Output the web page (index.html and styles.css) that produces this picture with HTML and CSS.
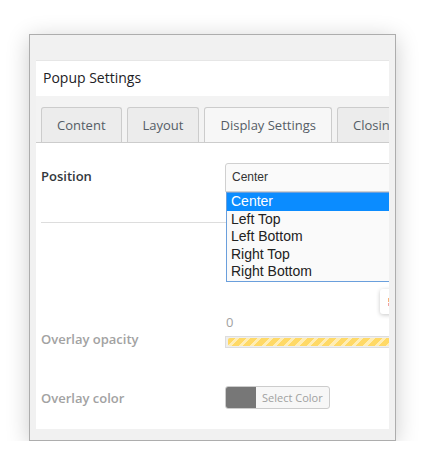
FILE: index.html
```html
<!DOCTYPE html>
<html>
<head>
<meta charset="utf-8">
<link rel="stylesheet" href="styles.css">
</head>
<body>
<div class="window">
  <div class="panel">
    <div class="header">Popup Settings</div>
    <div class="tabs">
      <div class="tab">Content</div>
      <div class="tab">Layout</div>
      <div class="tab active">Display Settings</div>
      <div class="tab">Closing</div>
    </div>
    <div class="content">
      <div class="row row-position">
        <div class="label">Position</div>
        <div class="control">
          <div class="select">Center</div>
          <ul class="dropdown">
            <li class="selected">Center</li>
            <li>Left Top</li>
            <li>Left Bottom</li>
            <li>Right Top</li>
            <li>Right Bottom</li>
          </ul>
        </div>
      </div>
      <div class="row row-opacity">
        <div class="label muted">Overlay opacity</div>
        <div class="control">
          <div class="tip"><span class="tip-mark"></span></div>
          <div class="value">0</div>
          <div class="slider"><div class="slider-fill"></div></div>
        </div>
      </div>
      <div class="row row-color">
        <div class="label muted">Overlay color</div>
        <div class="control">
          <div class="color-btn"><span class="swatch"></span><span class="color-text">Select Color</span></div>
        </div>
      </div>
    </div>
  </div>
</div>
</body>
</html>
```
FILE: styles.css
```css
html, body {
  margin: 0;
  padding: 0;
  background: #ffffff;
}
body {
  font-family: "Open Sans", "Liberation Sans", sans-serif;
  padding-top: 34px;
  padding-left: 29px;
}
.window {
  width: 353px;
  border: 1px solid #adadad;
  background: #f1f1f1;
  padding: 25px 6px 11px 6px;
  box-shadow: 0 4px 22px rgba(0, 0, 0, 0.2);
}
.panel {
  overflow: hidden;
  border-top: 1px solid #e6e6e6;
}
.header {
  background: #ffffff;
  height: 35px;
  line-height: 34px;
  padding-left: 7px;
  font-size: 14px;
  font-weight: 500;
  color: #1d2125;
  white-space: nowrap;
}
.tabs {
  display: flex;
  gap: 5px;
  background: #f3f3f3;
  padding: 11px 0 0 5px;
  border-bottom: 1px solid #cccccc;
  white-space: nowrap;
  height: 35px;
}
.tab {
  flex: none;
  height: 35px;
  box-sizing: border-box;
  line-height: 34px;
  padding: 0 15px;
  border: 1px solid #cccccc;
  border-bottom: none;
  border-radius: 3px 3px 0 0;
  background: #ececec;
  font-size: 13px;
  color: #555d66;
}
.tab.active {
  background: #f7f7f7;
}
.content {
  background: #ffffff;
  padding: 0 0 20px 5px;
}
.row {
  display: grid;
  grid-template-columns: 184px 260px;
}
.label {
  font-size: 13px;
  font-weight: 600;
  color: #32373c;
  white-space: nowrap;
}
.label.muted {
  color: #a2a2a2;
}
.control {
  position: relative;
}
.row-position {
  padding: 20px 0 30px 0;
  border-bottom: 1px solid #dddddd;
  margin-right: -100px;
}
.row-position .label {
  line-height: 26px;
}
.select {
  height: 29px;
  box-sizing: border-box;
  border: 1px solid #d0d0d0;
  border-radius: 3px 3px 0 0;
  background: #fafafa;
  font-family: "Liberation Sans", Arial, sans-serif;
  font-size: 12px;
  line-height: 27px;
  padding-left: 6px;
  color: #333333;
}
.dropdown {
  position: absolute;
  top: 29px;
  left: 1px;
  right: 0;
  margin: 0;
  padding: 0;
  list-style: none;
  border: 1px solid #6a9fdc;
  background: #fafafa;
  font-family: "Liberation Sans", Arial, sans-serif;
  font-size: 14px;
  color: #222222;
  z-index: 2;
}
.dropdown li {
  height: 17.6px;
  line-height: 17.6px;
  padding-left: 4px;
}
.dropdown li.selected {
  background: #0b8cff;
  color: #ffffff;
}
.row-opacity {
  padding-top: 90px;
}
.row-opacity .label {
  align-self: end;
  line-height: 18px;
}
.tip {
  position: absolute;
  left: 155px;
  top: -24px;
  width: 16px;
  height: 25px;
  background: #ffffff;
  border-radius: 3px;
  box-shadow: 0 1px 4px rgba(0, 0, 0, 0.22);
}
.tip-mark {
  position: absolute;
  left: 8px;
  top: 9px;
  width: 2px;
  height: 8px;
  background: linear-gradient(#f7b27a 0 45%, transparent 45% 60%, #f2a0a0 60%);
}
.value {
  font-size: 13px;
  line-height: 18px;
  color: #a2a2a2;
  padding-left: 1px;
}
.slider {
  margin-top: 5px;
  height: 12px;
  box-sizing: border-box;
  border: 1px solid #dddddd;
  background: #eeeeee;
  padding: 1px 2px;
}
.slider-fill {
  height: 8px;
  border-radius: 2px;
  background: repeating-linear-gradient(135deg, #ffd966 0 5px, #ffedb5 5px 8px);
}
.row-color {
  margin-top: 38px;
  align-items: center;
}
.row-color .label {
  line-height: 18px;
}
.color-btn {
  display: flex;
  width: fit-content;
  height: 23px;
  box-sizing: border-box;
  border: 1px solid #cccccc;
  border-radius: 3px;
  background: #f7f7f7;
  overflow: hidden;
}
.swatch {
  width: 30px;
  background: #777777;
}
.color-text {
  font-size: 11px;
  line-height: 21px;
  color: #a0a0a0;
  padding: 0 6px 0 6px;
}
```
